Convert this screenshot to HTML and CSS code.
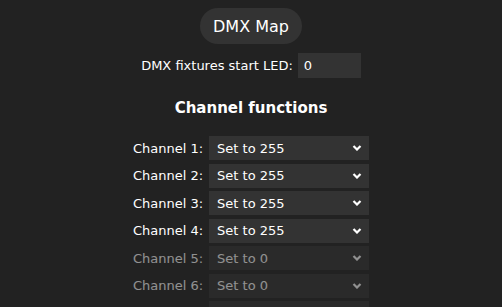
FILE: index.html
```html
<!DOCTYPE html>
<html lang="en">
<head>
    <meta charset="UTF-8">
    <title>DMX Map</title>
    <link rel="stylesheet" href="styles.css">
</head>
<body>
    <div class="page">
        <button class="pill">DMX Map</button>

        <div class="start-row">
            <label for="startLed">DMX fixtures start LED:</label>
            <input type="number" id="startLed" value="0" min="0">
        </div>

        <h2>Channel functions</h2>

        <div class="channels">
            <label>Channel 1:</label>
            <div class="select"><span>Set to 255</span><svg viewBox="0 0 10 6"><path d="M1.5 1l3.5 3.5 3.5-3.5"/></svg></div>
            <label>Channel 2:</label>
            <div class="select"><span>Set to 255</span><svg viewBox="0 0 10 6"><path d="M1.5 1l3.5 3.5 3.5-3.5"/></svg></div>
            <label>Channel 3:</label>
            <div class="select"><span>Set to 255</span><svg viewBox="0 0 10 6"><path d="M1.5 1l3.5 3.5 3.5-3.5"/></svg></div>
            <label>Channel 4:</label>
            <div class="select"><span>Set to 255</span><svg viewBox="0 0 10 6"><path d="M1.5 1l3.5 3.5 3.5-3.5"/></svg></div>
            <label class="off">Channel 5:</label>
            <div class="select off"><span>Set to 0</span><svg viewBox="0 0 10 6"><path d="M1.5 1l3.5 3.5 3.5-3.5"/></svg></div>
            <label class="off">Channel 6:</label>
            <div class="select off"><span>Set to 0</span><svg viewBox="0 0 10 6"><path d="M1.5 1l3.5 3.5 3.5-3.5"/></svg></div>
            <label class="off">Channel 7:</label>
            <div class="select off"><span>Set to 0</span><svg viewBox="0 0 10 6"><path d="M1.5 1l3.5 3.5 3.5-3.5"/></svg></div>
        </div>
    </div>
</body>
</html>
```

FILE: styles.css
```css
* {
    margin: 0;
    padding: 0;
    box-sizing: border-box;
}

body {
    font-family: 'DejaVu Sans', Verdana, sans-serif;
    background: #222;
    color: #fff;
    font-size: 13px;
    overflow: hidden;
}

.page {
    display: flex;
    flex-direction: column;
    align-items: center;
    padding-top: 8px;
}

.pill {
    height: 36px;
    padding: 0 13px;
    border: none;
    border-radius: 18px;
    background: #333;
    color: #fff;
    font-family: inherit;
    font-size: 16px;
}

.start-row {
    display: flex;
    align-items: center;
    gap: 5px;
    margin-top: 9px;
}

#startLed {
    width: 63px;
    height: 25px;
    border: none;
    background: #333;
    color: #fff;
    font-family: inherit;
    font-size: 13px;
    padding-left: 6px;
    -moz-appearance: textfield;
}

#startLed::-webkit-inner-spin-button,
#startLed::-webkit-outer-spin-button {
    -webkit-appearance: none;
}

h2 {
    font-size: 15px;
    font-weight: bold;
    margin-top: 21px;
    margin-bottom: 19px;
}

.channels {
    display: grid;
    grid-template-columns: auto 160px;
    column-gap: 6px;
    row-gap: 3.5px;
    align-items: center;
}

.channels label {
    text-align: right;
}

.select {
    height: 24px;
    background: #333;
    display: flex;
    align-items: center;
    justify-content: space-between;
    padding: 0 7px 0 8px;
}

.select svg {
    width: 10px;
    height: 6px;
    fill: none;
    stroke: #fff;
    stroke-width: 2.2;
}

.off {
    opacity: 0.5;
}
```
